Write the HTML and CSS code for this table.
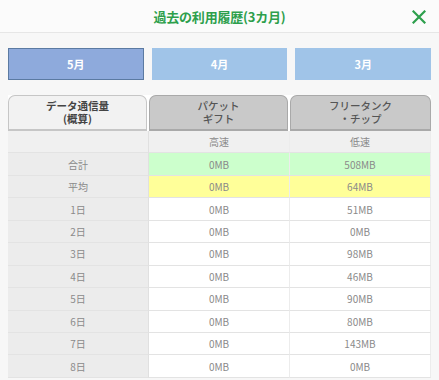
FILE: index.html
```html
<!DOCTYPE html>
<html lang="ja">
<head>
<meta charset="utf-8">
<link rel="stylesheet" href="styles.css">
</head>
<body>
<header class="topbar">
  <h1 class="title">過去の利用履歴(3カ月)</h1>
  <svg class="close" width="14" height="14" viewBox="0 0 14 14"><path d="M1.5 1.5 L12.5 12.5 M12.5 1.5 L1.5 12.5" stroke="#2d9f4c" stroke-width="2.2" stroke-linecap="square" fill="none"/></svg>
</header>
<div class="tabs">
  <div class="tab active">5月</div>
  <div class="tab">4月</div>
  <div class="tab">3月</div>
</div>
<div class="table">
  <div class="head first"><span>データ通信量</span><span>(概算)</span></div>
  <div class="head"><span>パケット</span><span>ギフト</span></div>
  <div class="head"><span>フリータンク</span><span>・チップ</span></div>

  <div class="cell label sub"></div><div class="cell sub">高速</div><div class="cell sub">低速</div>
  <div class="cell label">合計</div><div class="cell green">0MB</div><div class="cell green">508MB</div>
  <div class="cell label">平均</div><div class="cell yellow">0MB</div><div class="cell yellow">64MB</div>
  <div class="cell label">1日</div><div class="cell">0MB</div><div class="cell">51MB</div>
  <div class="cell label">2日</div><div class="cell">0MB</div><div class="cell">0MB</div>
  <div class="cell label">3日</div><div class="cell">0MB</div><div class="cell">98MB</div>
  <div class="cell label">4日</div><div class="cell">0MB</div><div class="cell">46MB</div>
  <div class="cell label">5日</div><div class="cell">0MB</div><div class="cell">90MB</div>
  <div class="cell label">6日</div><div class="cell">0MB</div><div class="cell">80MB</div>
  <div class="cell label">7日</div><div class="cell">0MB</div><div class="cell">143MB</div>
  <div class="cell label">8日</div><div class="cell">0MB</div><div class="cell">0MB</div>
</div>
</body>
</html>
```
FILE: styles.css
```css
html, body {
  margin: 0;
  padding: 0;
  background: #f7f7f7;
  font-family: "Noto Sans CJK JP", "Noto Sans", sans-serif;
  overflow: hidden;
}
.topbar {
  height: 32px;
  background: #fbfbfb;
  border-bottom: 1px solid #e6e6e6;
  display: flex;
  align-items: center;
  justify-content: center;
  position: relative;
}
.title {
  margin: 0;
  font-size: 13px;
  font-weight: 700;
  color: #2d9f4c;
  letter-spacing: -0.2px;
}
.close {
  position: absolute;
  right: 13px;
  top: 10px;
}
.tabs {
  display: grid;
  grid-template-columns: repeat(3, 1fr);
  gap: 8px;
  padding: 15px 8px 0 8px;
}
.tab {
  height: 32px;
  box-sizing: border-box;
  background: #a0c4e8;
  color: #fff;
  font-weight: 700;
  font-size: 11px;
  display: flex;
  align-items: center;
  justify-content: center;
}
.tab.active {
  background: #8eaadc;
  border: 1.5px solid #5b7aa2;
}
.table {
  margin: 15px 8px 0 8px;
  display: grid;
  grid-template-columns: 141px 141px 141px;
  grid-auto-rows: 22.45px;
  grid-template-rows: 36px;
  background: #fff;
}
.head {
  box-sizing: border-box;
  margin-right: 2px;
  border: 1.5px solid #a9a9a9;
  border-bottom-width: 2px;
  border-radius: 7px 7px 0 0;
  background: #c9c9c9;
  color: #555;
  font-size: 10.5px;
  font-weight: 500;
  line-height: 13px;
  display: flex;
  flex-direction: column;
  align-items: center;
  justify-content: center;
  text-align: center;
  padding-bottom: 1px;
}
.head span { display: block; height: 13px; }
.head:nth-child(3) { margin-right: 0; }
.head.first {
  background: #f2f2f2;
  border-color: #c6c6c6;
  color: #444;
  font-weight: 700;
}
.cell {
  box-sizing: border-box;
  border-bottom: 1px solid #e3e3e3;
  border-right: 1px solid #ececec;
  font-size: 10px;
  color: #8a8a8a;
  display: flex;
  align-items: center;
  justify-content: center;
  background: #fff;
}
.cell.label {
  background: #ececec;
  border-right: 1px solid #e0e0e0;
}
.cell.sub { background: #f0f0f0; }
.cell.green { background: #ccffcc; }
.cell.yellow { background: #ffff99; }
```
